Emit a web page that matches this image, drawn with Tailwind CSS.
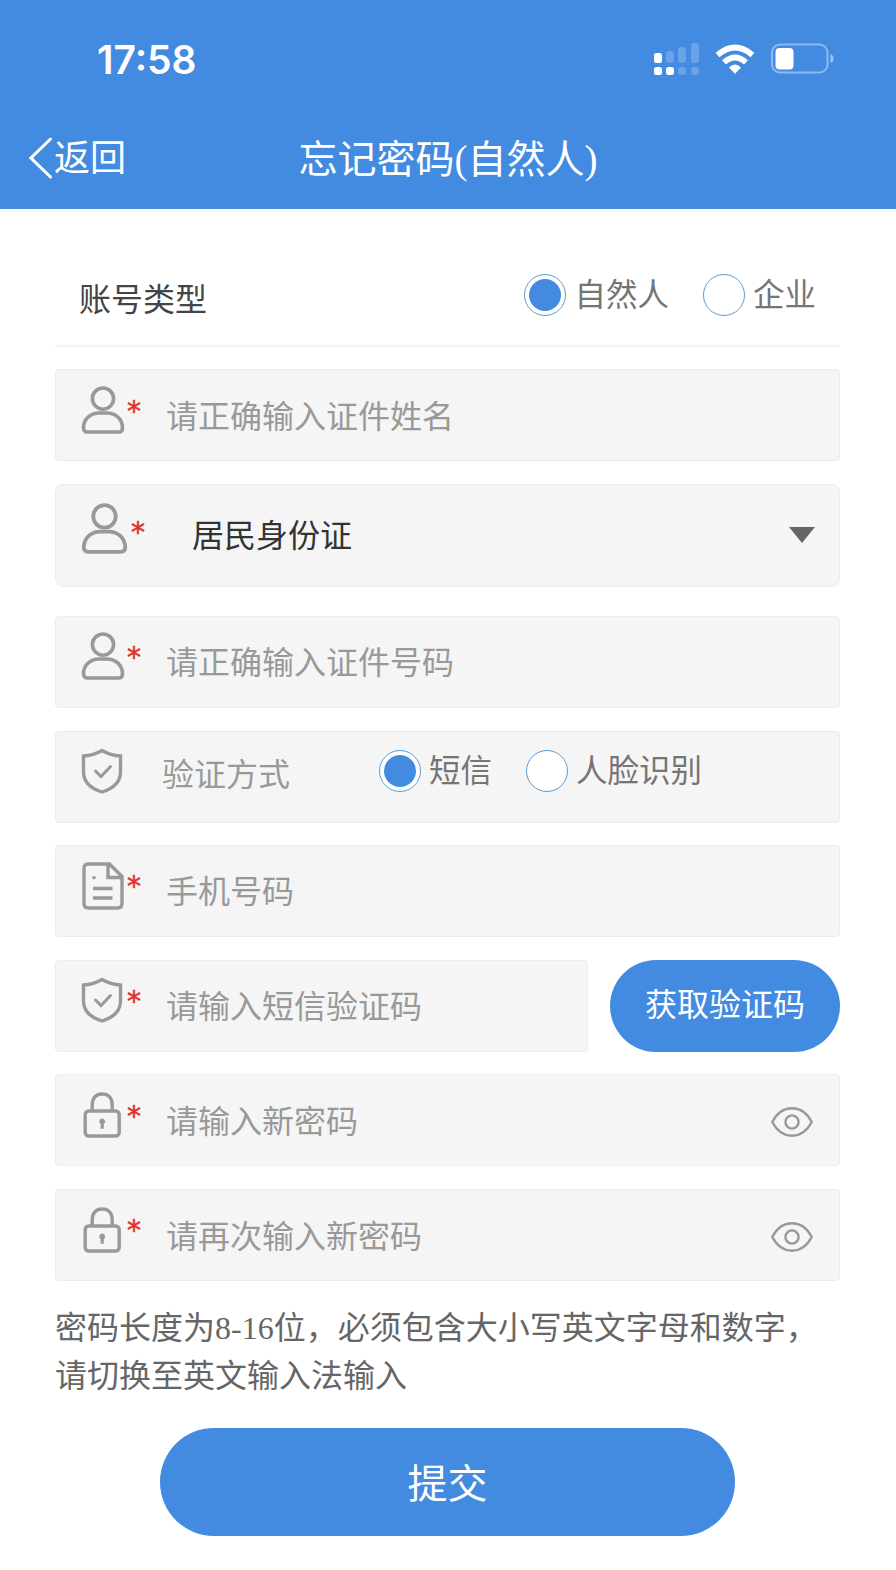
<!DOCTYPE html>
<html lang="zh-CN">

<head>
    <meta charset="UTF-8">
    <meta name="viewport" content="width=device-width, initial-scale=1.0">
    <script src="https://cdn.jsdelivr.net/npm/@tailwindcss/browser@4"></script>
    <title>忘记密码</title>
</head>

<body class="w-[896px] h-[1570px] overflow-hidden bg-white font-['Noto_Sans_CJK_SC',sans-serif] text-[32px] leading-[48px] text-[#999]">

    <!-- Icons -->
    <svg class="hidden">
        <symbol id="user" viewBox="0 0 44 49">
            <g fill="none" stroke="#999" stroke-width="3.6">
                <circle cx="22" cy="12.6" r="10.6" />
                <path d="M18 27H26C35 27 41.5 33.5 41.5 42Q41.5 46 37.5 46H6.5Q2.5 46 2.5 42C2.5 33.5 9 27 18 27Z" />
            </g>
        </symbol>
        <symbol id="shield" viewBox="0 0 42 46">
            <g fill="none" stroke="#999" stroke-width="3.4">
                <path d="M21 2.5Q12.5 7.5 2.5 8V24C2.5 34 10 40.5 21 44C32 40.5 39.5 34 39.5 24V8Q29.5 7.5 21 2.5Z" />
                <path d="M14.5 23L20 28.5L29.5 18.5" stroke-width="3" stroke-linecap="round" />
            </g>
        </symbol>
        <symbol id="file" viewBox="0 0 42 48">
            <g fill="none" stroke="#999" stroke-width="3.4">
                <path d="M27.5 2H6.5Q2 2 2 6.5V41.5Q2 46 6.5 46H35.5Q40 46 40 41.5V14.5ZM26 2V15.5H40" />
                <path d="M11 26.5H30.5M11 36H30.5" />
            </g>
            <circle cx="12" cy="15.8" r="1.8" fill="#999" />
        </symbol>
        <symbol id="lock" viewBox="0 0 38 46">
            <g fill="none" stroke="#999" stroke-width="3.4">
                <path d="M9.2 19V13C9.2 6 13 2 19.2 2S29.2 6 29.2 13V19" />
                <rect x="2.2" y="19" width="34" height="25" rx="3.5" />
            </g>
            <path d="M19.2 26.5a3 3 0 0 1 1.6 5.5V36.8H17.6V32A3 3 0 0 1 19.2 26.5Z" fill="#999" />
        </symbol>
        <symbol id="eye" viewBox="0 0 42 30">
            <g fill="none" stroke="#999" stroke-width="2.4" stroke-linejoin="round">
                <path d="M1.3 15C6 6 13 1.3 21 1.3S36 6 40.7 15C36 24 29 28.7 21 28.7S6 24 1.3 15Z" />
                <circle cx="21" cy="15" r="6.6" />
            </g>
        </symbol>
    </svg>

    <!-- Header -->
    <header class="h-[209px] bg-[#438be0] text-white">
        <div class="flex h-[120px] items-center pl-[97px] pr-[62px]">
            <span class="font-['Inter'] text-[39px] font-semibold">17:58</span>
            <svg class="ml-auto" width="182" height="34" viewBox="0 0 182 34" fill="#fff">
                <rect x="2" y="10" width="8" height="10" rx="2.5" />
                <rect x="2" y="24" width="8" height="8" rx="2.5" />
                <rect x="14" y="24" width="8" height="8" rx="2.5" />
                <g opacity=".2">
                    <rect x="14" y="8" width="8" height="12" rx="3" />
                    <rect x="26" y="4" width="8" height="16" rx="3" />
                    <rect x="39" y="0" width="8" height="20" rx="3" />
                    <rect x="26" y="24" width="8" height="8" rx="3" />
                    <rect x="39" y="24" width="8" height="8" rx="3" />
                </g>
                <g fill="none" stroke="#fff" stroke-width="5.8">
                    <path d="M65.5 12Q83 -3 100.5 12" />
                    <path d="M72 19.3Q83 9.5 94 19.3" />
                </g>
                <path d="M77 24.5Q83 18.5 89 24.5L83 30.7Z" />
                <rect x="120" y="1.5" width="55.5" height="28" rx="8" fill="none" stroke="#fff" stroke-opacity=".4" stroke-width="2" />
                <rect x="123.5" y="5" width="18" height="21.5" rx="4" />
                <path d="M178.5 11Q181.5 12 181.5 15.5T178.5 20Z" opacity=".5" />
            </svg>
        </div>
        <div class="relative flex h-[75px] items-center pl-[29px]">
            <svg width="24" height="42" viewBox="0 0 24 42" fill="none" stroke="#fff" stroke-width="3" stroke-linecap="round">
                <path d="M21.5 2L2 21L21.5 40" />
            </svg>
            <span class="ml-[1px] pb-[6px] text-[36px]">返回</span>
            <h1 class="absolute inset-x-0 pt-[5px] text-center font-['Liberation_Serif','Noto_Sans_CJK_SC',serif] text-[39px]">忘记密码(自然人)</h1>
        </div>
    </header>

    <main class="pl-[55px] pr-[56px]">

        <!-- Account type -->
        <div class="flex h-[138px] items-center border-b-2 border-[#f3f3f3] pl-6 pr-6 pt-[39px]">
            <span class="text-[#444]">账号类型</span>
            <div class="-mt-[3px] ml-auto flex items-center text-[31.5px] text-[#757575]">
                <span class="mr-2 flex size-[42px] items-center justify-center rounded-full border border-[#5b9fd6] bg-white"><i class="size-8 rounded-full bg-[#438be0]"></i></span>
                <span class="pb-[7px]">自然人</span>
                <span class="ml-[34px] mr-2 size-[42px] rounded-full border border-[#5b9fd6] bg-white"></span>
                <span class="pb-[7px]">企业</span>
            </div>
        </div>

        <!-- Fields -->
        <div class="mt-[22px] flex h-[92px] rounded border border-[#ececec] bg-[#f5f5f5] pl-[25px]">
            <svg class="mt-4 h-[49px] w-[44px]"><use href="#user" /></svg>
            <span class="mt-[18px] w-[41px] pl-[2px] font-['DejaVu_Sans',sans-serif] text-[28px] text-[#e02f2f] [-webkit-text-stroke:0.5px]">*</span>
            <span class="mt-5">请正确输入证件姓名</span>
        </div>

        <div class="mt-[23px] flex h-[103px] rounded-lg border border-[#ececec] bg-[#f5f5f5] pl-[25px]">
            <svg class="mt-[18px] h-[52px] w-[47px]"><use href="#user" /></svg>
            <span class="mt-6 w-[64px] pl-[3px] font-['DejaVu_Sans',sans-serif] text-[28px] text-[#e02f2f] [-webkit-text-stroke:0.5px]">*</span>
            <span class="mt-6 text-[#333]">居民身份证</span>
            <svg class="ml-auto mr-6 mt-[42px]" width="26" height="16" viewBox="0 0 26 16"><path d="M0 0H26L13 16Z" fill="#666" /></svg>
        </div>

        <div class="mt-[29px] flex h-[92px] rounded border border-[#ececec] bg-[#f5f5f5] pl-[25px]">
            <svg class="mt-[15px] h-[49px] w-[44px]"><use href="#user" /></svg>
            <span class="mt-[17px] w-[41px] pl-[2px] font-['DejaVu_Sans',sans-serif] text-[28px] text-[#e02f2f] [-webkit-text-stroke:0.5px]">*</span>
            <span class="mt-[19px]">请正确输入证件号码</span>
        </div>

        <div class="mt-[23px] flex h-[92px] rounded border border-[#ececec] bg-[#f5f5f5] pl-[25px]">
            <svg class="mt-4 h-[46px] w-[42px]"><use href="#shield" /></svg>
            <span class="ml-[39px] mt-4 w-[217px]">验证方式</span>
            <div class="mt-[14px] flex h-[50px] items-center text-[31.5px] text-[#757575]">
                <span class="mr-2 flex size-[42px] items-center justify-center rounded-full border border-[#5b9fd6] bg-white"><i class="size-8 rounded-full bg-[#438be0]"></i></span>
                <span class="pb-[7px]">短信</span>
                <span class="ml-[34px] mr-2 size-[42px] rounded-full border border-[#5b9fd6] bg-white"></span>
                <span class="pb-[7px]">人脸识别</span>
            </div>
        </div>

        <div class="mt-[22px] flex h-[92px] rounded border border-[#ececec] bg-[#f5f5f5] pl-[26px]">
            <svg class="mt-4 h-[48px] w-[42px]"><use href="#file" /></svg>
            <span class="mt-[17px] w-[42px] pl-[3px] font-['DejaVu_Sans',sans-serif] text-[28px] text-[#e02f2f] [-webkit-text-stroke:0.5px]">*</span>
            <span class="mt-[19px]">手机号码</span>
        </div>

        <div class="mt-[23px] flex justify-between">
            <div class="flex h-[92px] w-[533px] rounded border border-[#ececec] bg-[#f5f5f5] pl-[25px]">
                <svg class="mt-4 h-[46px] w-[42px]"><use href="#shield" /></svg>
                <span class="mt-[17px] w-[43px] pl-[4px] font-['DejaVu_Sans',sans-serif] text-[28px] text-[#e02f2f] [-webkit-text-stroke:0.5px]">*</span>
                <span class="mt-[19px]">请输入短信验证码</span>
            </div>
            <button class="h-[92px] w-[230px] rounded-full bg-[#438be0] pb-[9px] text-white">获取验证码</button>
        </div>

        <div class="mt-[22px] flex h-[92px] rounded border border-[#ececec] bg-[#f5f5f5] pl-[27px]">
            <svg class="mt-[17px] h-[46px] w-[38px]"><use href="#lock" /></svg>
            <span class="mt-[18px] w-[45px] pl-[6px] font-['DejaVu_Sans',sans-serif] text-[28px] text-[#e02f2f] [-webkit-text-stroke:0.5px]">*</span>
            <span class="mt-5">请输入新密码</span>
            <svg class="ml-auto mr-[26px] mt-[32px] h-[30px] w-[42px]"><use href="#eye" /></svg>
        </div>

        <div class="mt-[23px] flex h-[92px] rounded border border-[#ececec] bg-[#f5f5f5] pl-[27px]">
            <svg class="mt-[17px] h-[46px] w-[38px]"><use href="#lock" /></svg>
            <span class="mt-[17px] w-[45px] pl-[6px] font-['DejaVu_Sans',sans-serif] text-[28px] text-[#e02f2f] [-webkit-text-stroke:0.5px]">*</span>
            <span class="mt-5">请再次输入新密码</span>
            <svg class="ml-auto mr-[26px] mt-[32px] h-[30px] w-[42px]"><use href="#eye" /></svg>
        </div>

        <p class="mt-[23px] whitespace-nowrap font-['Liberation_Serif','Noto_Sans_CJK_SC',serif] text-[#666]">密码长度为8-16位，必须包含大小写英文字母和数字，<br>请切换至英文输入法输入</p>

        <button class="mx-auto mt-[28px] block h-[108px] w-[575px] rounded-full bg-[#438be0] pb-[3px] text-[40px] text-white">提交</button>
    </main>

</body>

</html>
